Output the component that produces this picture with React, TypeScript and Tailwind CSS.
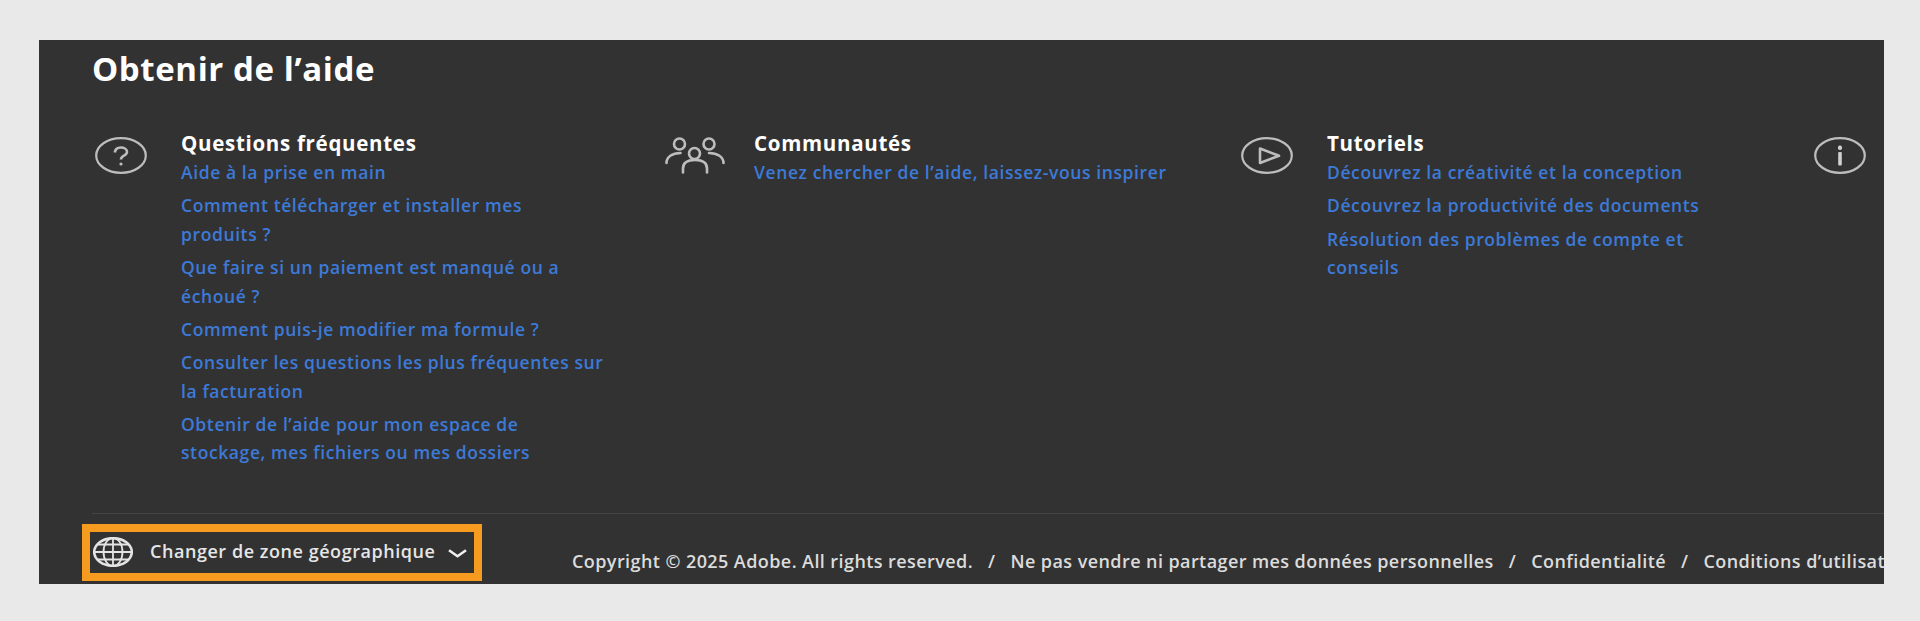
const font = "font-['Open_Sans',sans-serif]";

function HelpIcon() {
  return (
    <svg width="52" height="37" viewBox="0 0 52 37" fill="none" stroke="#bdbdbd" strokeWidth="2.200" className="ml-[3px]">
      <ellipse cx="26" cy="18.500" rx="24.800" ry="17.300" />
      <path d="M19.800 15.500c.4-3.300 2.700-5 6-5 3.500 0 6.200 1.800 6.200 4.300 0 2-1.200 3-3 3.900-1.900 1-3 1.800-3 3.800" strokeWidth="2.600" />
      <circle cx="26" cy="27" r="1.600" fill="#bdbdbd" stroke="none" />
    </svg>
  );
}

function CommunityIcon() {
  return (
    <svg width="60" height="37" viewBox="0 0 60 37" fill="none" stroke="#bdbdbd" strokeWidth="2.600" strokeLinecap="round">
      <circle cx="14.500" cy="7" r="5.500" />
      <circle cx="44" cy="7" r="5.500" />
      <circle cx="29.500" cy="16.500" r="5.500" />
      <path d="M18 35.500v-4c0-6 4-8.500 12-8.500s12 2.500 12 8.500v4" />
      <path d="M1.500 26c0-6 5.500-10 14-10" />
      <path d="M44 16c8.500 0 14.500 4 14.500 10" />
    </svg>
  );
}

function PlayIcon() {
  return (
    <svg width="52" height="37" viewBox="0 0 52 37" fill="none" stroke="#bdbdbd" strokeWidth="2.200" strokeLinejoin="round" className="ml-[3px]">
      <ellipse cx="26" cy="18.500" rx="24.800" ry="17.300" />
      <path d="M19 11.500v14.500l19-7.200z" strokeWidth="2.600" />
    </svg>
  );
}

function InfoIcon() {
  return (
    <svg width="52" height="37" viewBox="0 0 52 37" fill="none" stroke="#bdbdbd" strokeWidth="2.200" className="ml-[3px]">
      <ellipse cx="26" cy="18.500" rx="24.800" ry="17.300" />
      <rect x="24.200" y="15" width="3.600" height="13.500" rx="1" fill="#d0d0d0" stroke="none" />
      <rect x="24" y="8.500" width="4" height="4.500" rx="1.800" fill="#d0d0d0" stroke="none" />
    </svg>
  );
}

function GlobeIcon() {
  return (
    <svg width="40" height="30" viewBox="0 0 40 30" fill="none" stroke="#e4e4e4" strokeWidth="1.800" className="shrink-0">
      <ellipse cx="20" cy="15" rx="18.800" ry="13.800" strokeWidth="2.600" />
      <ellipse cx="20" cy="15" rx="9.500" ry="14" />
      <path d="M20 1v28M1 15h38M4 7.500h32M4 22.500h32" />
    </svg>
  );
}

type Column = { icon: React.ReactNode; title: string; links: string[] };

const columns: Column[] = [
  {
    icon: <HelpIcon />,
    title: "Questions fréquentes",
    links: [
      "Aide à la prise en main",
      "Comment télécharger et installer mes produits\u00a0?",
      "Que faire si un paiement est manqué ou a échoué\u00a0?",
      "Comment puis-je modifier ma formule\u00a0?",
      "Consulter les questions les plus fréquentes sur la facturation",
      "Obtenir de l’aide pour mon espace de stockage, mes fichiers ou mes dossiers",
    ],
  },
  {
    icon: <CommunityIcon />,
    title: "Communautés",
    links: ["Venez chercher de l’aide, laissez-vous inspirer"],
  },
  {
    icon: <PlayIcon />,
    title: "Tutoriels",
    links: [
      "Découvrez la créativité et la conception",
      "Découvrez la productivité des documents",
      "Résolution des problèmes de compte et conseils",
    ],
  },
  { icon: <InfoIcon />, title: "", links: [] },
];

export default function App() {
  return (
    <div className={`h-[621px] overflow-hidden bg-[#e9e9e9] pt-10 pl-[39px] pr-9 ${font}`}>
      <div className="flex h-[544px] flex-col overflow-hidden bg-[#323232] pl-[53px]">
        <h1 className="pt-[9px] text-[33px] leading-10 font-bold tracking-[0.6px] whitespace-nowrap text-white">
          Obtenir de l’aide
        </h1>

        <div className="mt-[39px] flex h-[385px] w-[2292px] shrink-0">
          {columns.map((col, i) => (
            <div key={i} className="flex w-[573px] shrink-0">
              <div className="w-[89px] shrink-0 pt-[9px]">{col.icon}</div>
              <div className="w-[424px]">
                <h2 className="text-[20.5px] leading-[30px] font-bold tracking-[0.7px] text-white">{col.title}</h2>
                <ul className="flex flex-col gap-[4.750px]">
                  {col.links.map((link, j) => (
                    <li key={j} className="text-[17.5px] leading-[28.5px] font-semibold tracking-[0.6px] text-[#3d7ad8]">
                      {link}
                    </li>
                  ))}
                </ul>
              </div>
            </div>
          ))}
        </div>

        <div className="flex shrink-0 items-start border-t border-[#454545] whitespace-nowrap">
          <button className="mt-[10px] -ml-[10px] flex h-[57px] w-[400px] shrink-0 items-center border-8 border-[#f79a20] pb-[2px] pl-[3px] text-[#e6e6e6]">
            <GlobeIcon />
            <span className="ml-[17px] text-[18px] font-semibold tracking-[0.55px]">Changer de zone géographique</span>
            <svg width="19" height="9" viewBox="0 0 19 9" fill="none" stroke="#f0f0f0" strokeWidth="2.600" className="mt-1 ml-[13px] shrink-0">
              <path d="M1 1.200l8.500 6 8.500-6" />
            </svg>
          </button>
          <div className="mt-[37px] ml-[90px] flex gap-[15px] text-[18px] leading-5 font-semibold tracking-[0.42px] text-[#dcdcdc]">
            <span>Copyright © 2025 Adobe. All rights reserved.</span>
            <span>/</span>
            <span>Ne pas vendre ni partager mes données personnelles</span>
            <span>/</span>
            <span>Confidentialité</span>
            <span>/</span>
            <span>Conditions d’utilisation</span>
          </div>
        </div>
      </div>
    </div>
  );
}
